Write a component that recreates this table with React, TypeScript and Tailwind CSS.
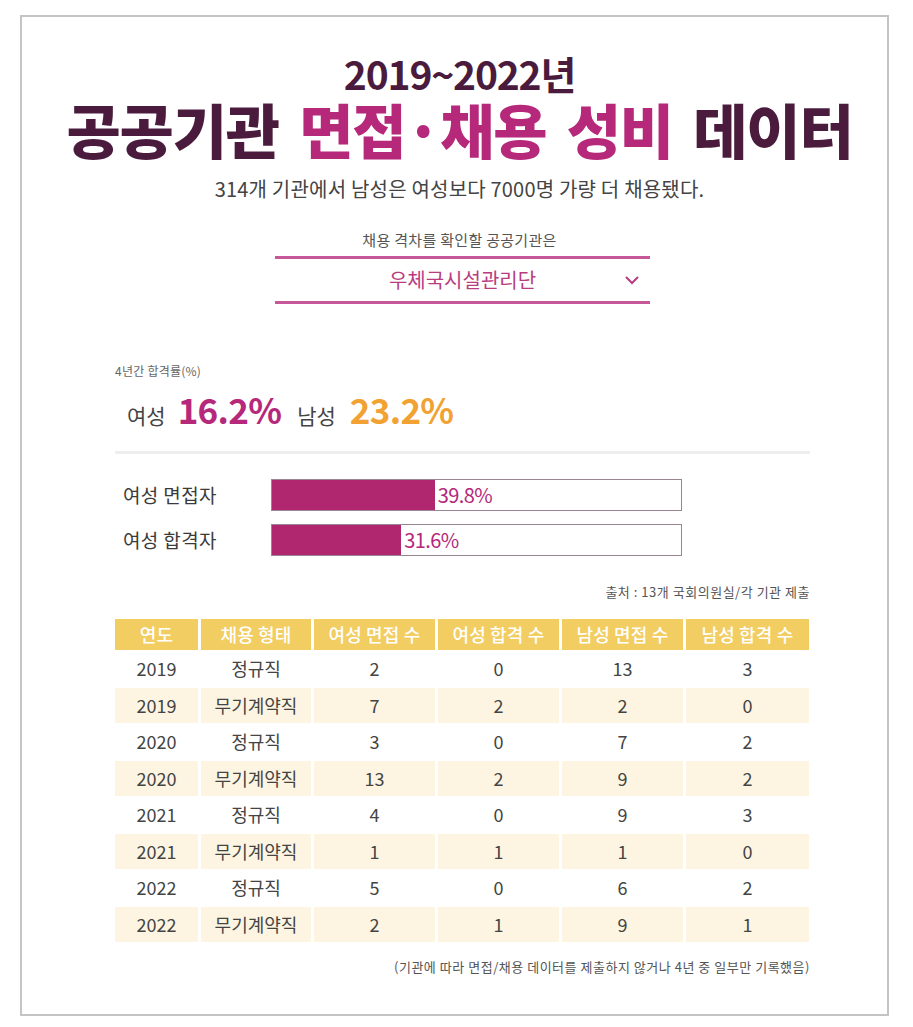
const font = "font-['Noto_Sans_CJK_KR','Noto_Sans',sans-serif]";

type Row = { year: string; kind: string; vals: number[] };

const rows: Row[] = [
  { year: "2019", kind: "정규직", vals: [2, 0, 13, 3] },
  { year: "2019", kind: "무기계약직", vals: [7, 2, 2, 0] },
  { year: "2020", kind: "정규직", vals: [3, 0, 7, 2] },
  { year: "2020", kind: "무기계약직", vals: [13, 2, 9, 2] },
  { year: "2021", kind: "정규직", vals: [4, 0, 9, 3] },
  { year: "2021", kind: "무기계약직", vals: [1, 1, 1, 0] },
  { year: "2022", kind: "정규직", vals: [5, 0, 6, 2] },
  { year: "2022", kind: "무기계약직", vals: [2, 1, 9, 1] },
];

const headers = ["연도", "채용 형태", "여성 면접 수", "여성 합격 수", "남성 면접 수", "남성 합격 수"];

const bars = [
  { label: "여성 면접자", pct: 39.8 },
  { label: "여성 합격자", pct: 31.6 },
];

export default function App() {
  return (
    <div className={`bg-white w-[913px] h-[1027px] pt-[15px] pl-[20px] ${font}`}>
      <div className="w-[869px] h-[1001px] border-2 border-[#c4c4c4] pl-[10px] flex flex-col items-center">
        {/* TITLE */}
        <div className="mt-[34px] h-[44px] leading-[44px] text-[39px] font-bold tracking-[-0.03em] text-[#4a1b3d]">
          2019~2022년
        </div>
        <div className="h-[68px] leading-[68px] text-[59px] font-black tracking-[-0.02em] [word-spacing:8px] text-[#4a1b3d] whitespace-nowrap">
          공공기관 <span className="text-[#b5287a]">면접·채용 성비</span> 데이터
        </div>
        <div className="mt-[13px] h-[26px] leading-[26px] text-[20px] text-[#444] tracking-[0.01em]">
          314개 기관에서 남성은 여성보다 7000명 가량 더 채용됐다.
        </div>

        {/* SELECT */}
        <div className="mt-[29px] h-[18px] text-[15px] leading-[18px] text-[#555] tracking-[0.02em]">
          채용 격차를 확인할 공공기관은
        </div>
        <div className="mt-[7px] ml-[6px] w-[375px] h-[48px] border-y-[3px] border-[#c6589a] flex items-center justify-center relative">
          <span className="text-[20px] text-[#b83d80]">우체국시설관리단</span>
          <svg className="absolute right-[10px] top-[15px]" width="16" height="12" viewBox="0 0 16 12" fill="none">
            <path d="M2 3 L8 9 L14 3" stroke="#b83d80" strokeWidth="2" />
          </svg>
        </div>

        {/* RATES */}
        <div className="self-stretch pl-[83px] pr-[77px]">
          <div className="mt-[60px] h-[14px] text-[12px] leading-[14px] text-[#666] tracking-[0.02em]">4년간 합격률(%)</div>
          <div className="mt-[11px] h-[40px] leading-[40px] flex items-baseline pl-[12px] whitespace-nowrap">
            <span className="text-[21px] text-[#444]">여성</span>
            <span className="ml-[12px] text-[35px] font-bold text-[#b5287a] tracking-[-0.02em]">16.2%</span>
            <span className="ml-[16px] text-[21px] text-[#444]">남성</span>
            <span className="ml-[14px] text-[35px] font-bold text-[#f1a232] tracking-[-0.02em]">23.2%</span>
          </div>
          <div className="mt-[22px] h-[3px] bg-[#eeeeee]" />

          {/* BARS */}
          <div className="mt-[25px] flex flex-col gap-[13px]">
            {bars.map((b) => (
              <div key={b.label} className="flex items-center h-[32px]">
                <div className="w-[156px] pl-[8px] text-[19px] text-[#3a3a3a] tracking-[0.02em]">{b.label}</div>
                <div className="w-[411px] h-[32px] border border-[#9b8593] flex items-center">
                  <div className="h-full bg-[#b0266f]" style={{ width: `${b.pct}%` }} />
                  <span className="ml-[3px] text-[20px] text-[#b5287a] tracking-[-0.03em]">{b.pct}%</span>
                </div>
              </div>
            ))}
          </div>

          {/* SOURCE */}
          <div className="mt-[28px] h-[16px] text-right text-[13px] leading-[16px] text-[#555] tracking-[0.04em]">
            출처 : 13개 국회의원실/각 기관 제출
          </div>

          {/* TABLE */}
          <div className="mt-[19px] grid grid-cols-[83px_110px_121px_121px_121px_123px] gap-x-[3px] gap-y-[1px]">
            {headers.map((h) => (
              <div
                key={h}
                className="h-[31px] bg-[#f2cd62] text-white text-[18px] font-medium flex items-center justify-center tracking-[0.01em] whitespace-nowrap"
              >
                {h}
              </div>
            ))}
            {rows.map((r, i) => {
              const bg = i % 2 === 1 ? "bg-[#fdf5e1]" : "bg-white";
              const cells = [r.year, r.kind, ...r.vals.map(String)];
              return cells.map((c, j) => (
                <div
                  key={`${i}-${j}`}
                  className={`h-[35.5px] ${bg} text-[18px] text-[#444] flex items-center justify-center`}
                >
                  {c}
                </div>
              ));
            })}
          </div>

          {/* FOOTNOTE */}
          <div className="mt-[17px] h-[16px] text-right text-[13px] leading-[16px] text-[#555] tracking-[0.04em]">
            (기관에 따라 면접/채용 데이터를 제출하지 않거나 4년 중 일부만 기록했음)
          </div>
        </div>
      </div>
    </div>
  );
}
